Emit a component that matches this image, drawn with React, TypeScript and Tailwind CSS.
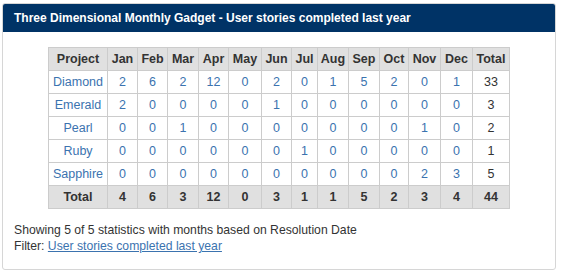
import React from "react";

const months = ["Jan","Feb","Mar","Apr","May","Jun","Jul","Aug","Sep","Oct","Nov","Dec"];
const widths = ["w-[59px]","w-[30px]","w-[30px]","w-[31px]","w-[30px]","w-[33px]","w-[30px]","w-[26px]","w-[31px]","w-[31px]","w-[29px]","w-[32px]","w-[32px]","w-[37px]"];
const rows: [string, number[], number][] = [
  ["Diamond", [2,6,2,12,0,2,0,1,5,2,0,1], 33],
  ["Emerald", [2,0,0,0,0,1,0,0,0,0,0,0], 3],
  ["Pearl", [0,0,1,0,0,0,0,0,0,0,1,0], 2],
  ["Ruby", [0,0,0,0,0,0,1,0,0,0,0,0], 1],
  ["Sapphire", [0,0,0,0,0,0,0,0,0,0,2,3], 5],
];
const totals = [4,6,3,12,0,3,1,1,5,2,3,4];

export default function App() {
  return (
    <div className="w-[561px] h-[275px] bg-white pt-[3px] pl-[2px]" style={{ fontFamily: '"Liberation Sans", Arial, sans-serif' }}>
      <div className="w-[554px] h-[267px] border border-[#d6d6d6] rounded-[3px] overflow-hidden">
        <div className="h-[28px] bg-[#003366] text-white font-bold text-[12px] pl-[11px] flex items-center">
          Three Dimensional Monthly Gadget - User stories completed last year
        </div>
        <div className="flex justify-center pt-[15px]">
          <table className="border-collapse text-[12.5px] text-center">
            <thead>
              <tr className="bg-[#e0e0e0] h-[23px]">
                <th className={`${widths[0]} border border-[#cccccc] font-bold text-[#333]`}>Project</th>
                {months.map((m, i) => (
                  <th key={m} className={`${widths[i+1]} border border-[#cccccc] font-bold text-[#333]`}>{m}</th>
                ))}
                <th className={`${widths[13]} border border-[#cccccc] font-bold text-[#333]`}>Total</th>
              </tr>
            </thead>
            <tbody>
              {rows.map(([name, vals, tot]) => (
                <tr key={name} className="h-[23px]">
                  <td className="border border-[#cccccc] text-[#3b73af]">{name}</td>
                  {vals.map((v, i) => (
                    <td key={i} className="border border-[#cccccc] text-[#3b73af]">{v}</td>
                  ))}
                  <td className="border border-[#cccccc] text-[#333]">{tot}</td>
                </tr>
              ))}
              <tr className="bg-[#e0e0e0] h-[23px]">
                <td className="border border-[#cccccc] font-bold text-[#333]">Total</td>
                {totals.map((v, i) => (
                  <td key={i} className="border border-[#cccccc] font-bold text-[#333]">{v}</td>
                ))}
                <td className="border border-[#cccccc] font-bold text-[#333]">44</td>
              </tr>
            </tbody>
          </table>
        </div>
        <div className="pl-[11px] pt-[13px] text-[12.2px] leading-[16px] text-[#333]">
          <div>Showing 5 of 5 statistics with months based on Resolution Date</div>
          <div>Filter: <a className="text-[#3b73af] underline">User stories completed last year</a></div>
        </div>
      </div>
    </div>
  );
}
